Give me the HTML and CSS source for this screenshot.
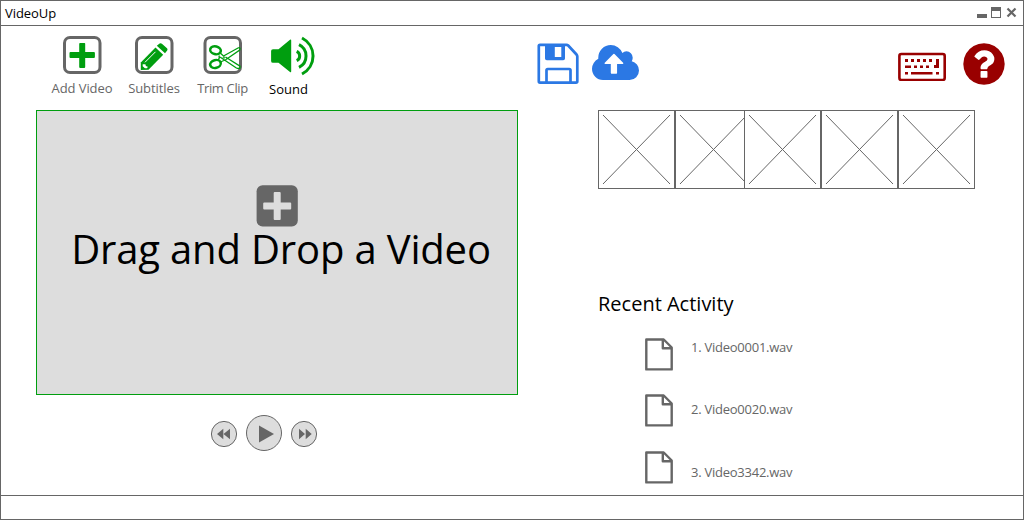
FILE: index.html
```html
<!DOCTYPE html>
<html lang="en">
<head>
<meta charset="utf-8">
<title>VideoUp</title>
<link rel="stylesheet" href="styles.css">
</head>
<body>
<div class="window">
  <header class="titlebar">
    <span class="title">VideoUp</span>
    <svg class="window-buttons" width="42" height="14" viewBox="976 6 42 14">
      <path class="gray" d="M977 14h10v4h-10z"/>
      <path class="gray" fill-rule="evenodd" d="M991 7h10v11h-10zM992 11v6h8v-6z"/>
      <path d="M1007.500 8.500l8 8M1015.500 8.500l-8 8" stroke="#666" stroke-width="2.200"/>
    </svg>
  </header>
  <main class="content">
    <section class="editor">
      <nav class="toolbar">
        <div class="tool">
          <svg width="72" height="44" viewBox="46 34 72 44">
            <rect class="frame" x="64.500" y="37.500" width="35.500" height="35" rx="5.500"/>
            <path class="green" d="M80 43h4.500q.7 0 .7.700v8.300h8.700q1 0 1 1v4q0 1-1 1h-8.700v8.900q0 1-1 1h-4q-1 0-1-1V58h-8.700q-1 0-1-1v-4q0-1 1-1h8.700v-8q0-1 .8-1z"/>
          </svg>
          <span>Add Video</span>
        </div>
        <div class="tool">
          <svg width="72" height="44" viewBox="118 34 72 44">
            <rect class="frame" x="136.500" y="37.500" width="35.500" height="35" rx="5.500"/>
            <path class="green" d="M140.800 62.500L155.500 47.500L163.200 54.700L148.500 69.800L140.800 70z"/>
            <path class="green" d="M156.800 45.800L159.600 43.500q1.200-.8 2.300.2L167 48.300q1 1 .2 2.200L165 53.200z"/>
            <path d="M145 62.300L155.500 51.800" stroke="#fff" stroke-width="1"/>
            <path d="M142.700 64.200v2l2.200 2h2.200l.7-1.500-1.900-.7-.5-1.700z" fill="#fff"/>
          </svg>
          <span>Subtitles</span>
        </div>
        <div class="tool trim">
          <svg width="65" height="44" viewBox="190 34 65 44">
            <rect class="frame" x="205" y="37.500" width="35.500" height="35" rx="5.500"/>
            <g fill="none" stroke="#009e0f">
              <ellipse cx="215.500" cy="50.300" rx="5.400" ry="3.900" stroke-width="2.500" transform="rotate(15 215.500 50.300)"/>
              <ellipse cx="215.500" cy="64" rx="5.400" ry="3.900" stroke-width="2.500" transform="rotate(-15 215.500 64)"/>
              <path d="M220.500 53.200l3 2.800L238 48q1.500-.7 2 .3l-.3 1.700L226 59.500l-5.500 2.500M219 55.500q1 3-1 4.500M225.500 57L240 66.200v2q-1.800.8-4-.5L220 57" stroke-width="1.300"/>
              <circle cx="224" cy="57.500" r=".8" stroke-width="1"/>
            </g>
          </svg>
          <span>Trim Clip</span>
        </div>
        <div class="tool sound">
          <svg width="66" height="44" viewBox="255 34 66 44">
            <path class="green" d="M273 49.200h5.500L290 39.800q1.200-.7 1.200.7v30.800q0 1.400-1.200.7L278.500 62.800H273q-1.900 0-1.900-1.900v-9.800q0-1.900 1.900-1.900z"/>
            <path d="M296.700 51.300a5.200 5.200 0 0 1 0 9.400M299 44.700a12.600 12.600 0 0 1 0 22.600M302 38a20.200 20.200 0 0 1 0 36" fill="none" stroke="#009e0f" stroke-width="3"/>
          </svg>
          <span>Sound</span>
        </div>
      </nav>
      <div class="dropzone">
        <svg width="42" height="42" viewBox="0 0 42 42">
          <rect class="gray" x=".6" y=".2" width="41.200" height="41.200" rx="6"/>
          <path d="M18.700 7h5q1 0 1 1v9.500h9.500q1 0 1 1v5q0 1-1 1h-9.500V34q0 1-1 1h-5q-1 0-1-1v-9.500H8.200q-1 0-1-1v-5q0-1 1-1h9.500V8q0-1 1-1z" fill="#ddd"/>
        </svg>
        <span class="drop-text">Drag and Drop a Video</span>
      </div>
      <div class="controls">
        <svg class="seek" width="28" height="28" viewBox="210 420 28 28">
          <circle class="knob" cx="224" cy="434" r="12.600"/>
          <path class="gray" d="M217 434l6.300-5.300v10.600zM223.500 434l6.500-5.300v10.600z"/>
        </svg>
        <svg width="38" height="38" viewBox="245 414 38 38">
          <circle class="knob" cx="264" cy="433" r="17.500"/>
          <path class="gray" d="M259 425.500l15 8.500-15 8.500z"/>
        </svg>
        <svg class="seek" width="28" height="28" viewBox="290 420 28 28">
          <circle class="knob" cx="304" cy="434" r="12.600"/>
          <path class="gray" d="M299 428.700l6 5.300-6 5.300zM305.700 428.700l6 5.300-6 5.300z"/>
        </svg>
      </div>
    </section>
    <section class="side">
      <div class="actions">
        <svg width="42" height="42" viewBox="537 43 42 42">
          <path d="M540 44.800h26.500q1 0 1.700.7l8.300 9q.8.900.8 2v24.800q0 1.300-1.300 1.300H540q-1.200 0-1.200-1.300V46q0-1.200 1.200-1.200z" fill="#fff" stroke="#2b78e4" stroke-width="2.700"/>
          <path fill="#2b78e4" fill-rule="evenodd" d="M545 45h20v13.500q0 1.800-1.800 1.800h-16.400q-1.800 0-1.800-1.800zM554.800 47v10h6.500v-10z"/>
          <path d="M546.500 82V70.300q0-1.300 1.300-1.300h21.400q1.300 0 1.300 1.300V82" fill="none" stroke="#2b78e4" stroke-width="2.700"/>
        </svg>
        <svg class="cloud" width="47" height="35" viewBox="0 128 1920 1408" preserveAspectRatio="none">
          <path fill="#2b78e4" d="M1280 864q0-14-9-23l-352-352q-9-9-23-9t-23 9l-351 351q-10 12-10 24 0 14 9 23t23 9h224v352q0 13 9.500 22.500t22.500 9.500h192q13 0 22.500-9.500t9.500-22.500v-352h224q13 0 22.500-9.500t9.500-22.500zm640 288q0 159-112.500 271.500t-271.500 112.500h-1088q-185 0-316.500-131.500t-131.500-316.500q0-130 70-240t188-165q-2-30-2-43 0-212 150-362t362-150q156 0 285.500 87t188.500 231q71-62 166-62 106 0 181 75t75 181q0 76-41 138 130 31 213.500 135.500t83.500 238.500z"/>
        </svg>
        <svg class="keyboard" width="48" height="29" viewBox="898 52 48 29">
          <rect x="899.400" y="54" width="45.300" height="26" rx="2" fill="#fff" stroke="#900" stroke-width="2.600"/>
          <path fill="#900" d="M905 59h3v3h-3zM911 59h3v3h-3zM917 59h3v3h-3zM923 59h3v3h-3zM929 59h3v3h-3zM936 59h3v9h-5v-3h2zM905 65.500h6v2.500h-6zM914 65.500h3v2.500h-3zM920 65.500h3v2.500h-3zM926 65.500h3v2.500h-3zM905 72h3v2.500h-3zM911 72h21.500v2.500H911zM936 72h3v2.500h-3z"/>
        </svg>
        <svg class="help" width="42" height="42" viewBox="117 117 1558 1558">
          <path fill="#900" d="M1024 1376v-192q0-14-9-23t-23-9h-192q-14 0-23 9t-9 23v192q0 14 9 23t23 9h192q14 0 23-9t9-23zm256-672q0-88-55.500-163t-138.500-116-170-41q-243 0-371 213-15 24 8 42l132 100q7 6 19 6 16 0 25-12 53-68 86-92 34-24 86-24 48 0 85.500 26t37.500 59q0 38-20 61t-68 45q-63 28-115.500 86.500t-52.500 125.500v36q0 14 9 23t23 9h192q14 0 23-9t9-23q0-19 21.500-49.500t54.500-49.500q32-18 49-28.500t46-35 44.500-48 28-60.500 12.500-81zm384 192q0 209-103 385.500t-279.500 279.500-385.500 103-385.500-103-279.500-279.500-103-385.500 103-385.500 279.500-279.500 385.500-103 385.500 103 279.500 279.500 103 385.500z"/>
        </svg>
      </div>
      <div class="thumbs">
        <svg class="thumb" viewBox="0 0 75 77"><path d="M4 4l67 69M71 4L4 73"/></svg>
        <svg class="thumb" viewBox="0 0 75 77"><path d="M4 4l67 69M71 4L4 73"/></svg>
        <svg class="thumb overlap" viewBox="0 0 75 77"><path d="M4 4l67 69M71 4L4 73"/></svg>
        <svg class="thumb" viewBox="0 0 75 77"><path d="M4 4l67 69M71 4L4 73"/></svg>
        <svg class="thumb" viewBox="0 0 75 77"><path d="M4 4l67 69M71 4L4 73"/></svg>
      </div>
      <h2 class="recent-title">Recent Activity</h2>
      <ul class="recent">
        <li>
          <svg class="file" viewBox="0 0 28 34"><path d="M1.300 1.500h17.400L26.700 9.500v21.900H1.300zM17.800 1.500v8.700h8.800"/></svg>
          <span>1. Video0001.wav</span>
        </li>
        <li>
          <svg class="file" viewBox="0 0 28 34"><path d="M1.300 1.500h17.400L26.700 9.500v21.900H1.300zM17.800 1.500v8.700h8.800"/></svg>
          <span>2. Video0020.wav</span>
        </li>
        <li class="last">
          <svg class="file" viewBox="0 0 28 34"><path d="M1.300 1.500h17.400L26.700 9.500v21.900H1.300zM17.800 1.500v8.700h8.800"/></svg>
          <span>3. Video3342.wav</span>
        </li>
      </ul>
    </section>
  </main>
  <footer class="statusbar"></footer>
</div>
</body>
</html>
```
FILE: styles.css
```css
* { box-sizing: border-box; }
body {
  margin: 0;
  background: #fff;
  color: #000;
  font: 13px/18px "Open Sans", "Noto Sans", sans-serif;
}
svg { display: block; flex: none; }
.window {
  display: flex;
  flex-direction: column;
  width: 1024px;
  height: 520px;
  border: 1px solid #666;
  overflow: hidden;
}
.titlebar {
  display: flex;
  justify-content: space-between;
  height: 25px;
  padding: 3px 5px 0 4px;
  border-bottom: 1px solid #666;
}
.window-buttons { margin-top: 2px; }
.title { letter-spacing: -0.05px; }
.content {
  display: flex;
  flex: 1;
}
.statusbar {
  height: 24px;
  border-top: 1px solid #666;
}
.gray { fill: #666; }
.green { fill: #009e0f; }
.frame { fill: #fff; stroke: #666; stroke-width: 3; }
.knob { fill: #ddd; stroke: #666; stroke-width: 1; }

.editor {
  width: 482px;
  margin-left: 35px;
}
.toolbar {
  display: flex;
  height: 84px;
  padding: 8px 0 0 10px;
}
.tool {
  display: flex;
  flex-direction: column;
  align-items: center;
  gap: 1px;
  width: 72px;
  color: #666;
  letter-spacing: -0.08px;
  white-space: nowrap;
}
.tool.trim { width: 65px; letter-spacing: -0.35px; }
.tool.sound { width: 66px; gap: 2px; color: #000; letter-spacing: 0; }
.sound span { margin-left: 1px; }
.dropzone {
  display: flex;
  flex-direction: column;
  align-items: center;
  height: 285px;
  padding-top: 74px;
  border: 1px solid #009e0f;
  background: #ddd;
}
.drop-text {
  margin-left: 8px;
  font-size: 40px;
  line-height: 44px;
  letter-spacing: -0.17px;
  white-space: nowrap;
}
.controls {
  display: flex;
  align-items: center;
  gap: 7px;
  padding: 19px 0 0 174px;
}
.seek { margin-top: 2px; }

.side {
  width: 470px;
  margin-left: 19px;
}
.actions {
  display: flex;
  align-items: flex-start;
  height: 84px;
  padding-top: 17px;
}
.cloud { margin: 2px 0 0 13px; }
.keyboard { margin: 9px 0 0 259px; }
.help { margin-left: 17px; }
.thumbs {
  display: flex;
  padding-left: 61px;
}
.thumb {
  width: 77px;
  height: 79px;
  border: 1px solid #666;
  background: #fff;
  fill: none;
  stroke: #666;
  stroke-width: 1;
}
.overlap { position: relative; margin-left: -8px; }
.recent-title {
  margin: 101px 0 0 61px;
  font-size: 20px;
  font-weight: 400;
  line-height: 28px;
}
.recent {
  margin: 20px 0 0 108px;
  padding: 0;
  list-style: none;
}
.recent li {
  display: flex;
  gap: 18px;
  height: 56px;
  color: #666;
  letter-spacing: -0.25px;
}
.recent li:nth-child(2) { height: 57px; }
.recent li:nth-child(2) span { margin-top: 6px; }
.recent li.last { height: 34px; }
.recent li.last span { margin-top: 12px; }
.file {
  width: 28px;
  height: 34px;
  fill: none;
  stroke: #666;
  stroke-width: 2.4;
  stroke-linejoin: round;
}
```
